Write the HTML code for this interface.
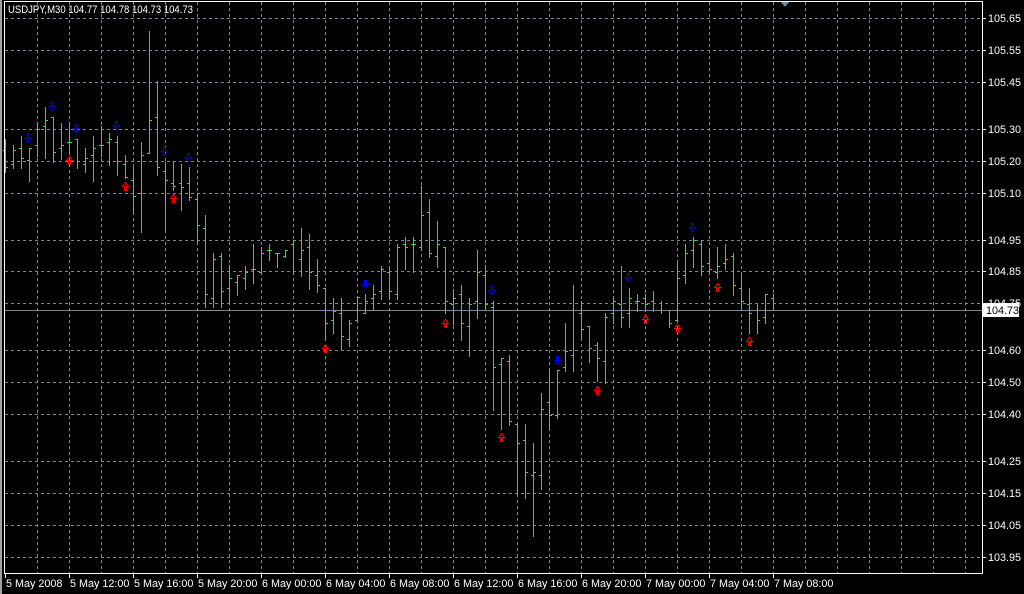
<!DOCTYPE html>
<html><head><meta charset="utf-8"><style>
html,body{margin:0;padding:0;background:#000;width:1024px;height:594px;overflow:hidden}
svg text{font-family:"Liberation Sans",sans-serif;font-size:10.8px;fill:#fff}
</style></head><body>
<svg id="c" width="1024" height="594" xmlns="http://www.w3.org/2000/svg" shape-rendering="crispEdges">
<rect width="1024" height="594" fill="#000"/>
<rect x="0" y="0" width="2" height="594" fill="#a0a0a0"/>
<g id="grid"></g>
<g id="bars"></g>
<g id="arrows"></g>
<line x1="5" y1="310.5" x2="982" y2="310.5" stroke="#778899"/>
<rect x="4.5" y="1.5" width="978" height="572" fill="none" stroke="#fff"/>
<polygon points="781,2 789,2 785,7" fill="#778899"/>
<text x="8" y="13" style="font-size:11px" textLength="185" lengthAdjust="spacingAndGlyphs">USDJPY,M30  104.77 104.78 104.73 104.73</text>
<g id="axis"></g>
<rect x="983" y="303" width="36" height="14" fill="#fff"/>
<text x="986" y="314" style="fill:#000">104.73</text>
</svg>
<script>
var NS="http://www.w3.org/2000/svg";
function el(p,t,a,txt){var e=document.createElementNS(NS,t);for(var k in a)e.setAttribute(k,a[k]);if(txt)e.textContent=txt;document.getElementById(p).appendChild(e);return e;}
var hy=[[18,"105.65"],[50,"105.55"],[82,"105.45"],[129,"105.30"],[161,"105.20"],[193,"105.10"],[240,"104.95"],[271,"104.85"],[303,"104.75"],[350,"104.60"],[382,"104.50"],[414,"104.40"],[461,"104.25"],[493,"104.15"],[525,"104.05"],[557,"103.95"]];
hy.forEach(function(h){
 el("grid","line",{x1:5,y1:h[0]+.5,x2:982,y2:h[0]+.5,stroke:"#778899","stroke-dasharray":"3,3"});
 el("axis","line",{x1:982,y1:h[0]+.5,x2:986,y2:h[0]+.5,stroke:"#fff"});
 el("axis","text",{x:988,y:h[0]+4},h[1]);
});
for(var x=37;x<982;x+=32){el("grid","line",{x1:x+.5,y1:2,x2:x+.5,y2:573,stroke:"#778899","stroke-dasharray":"3,3"});}
var tl=["5 May 2008","5 May 12:00","5 May 16:00","5 May 20:00","6 May 00:00","6 May 04:00","6 May 08:00","6 May 12:00","6 May 16:00","6 May 20:00","7 May 00:00","7 May 04:00","7 May 08:00"];
tl.forEach(function(t,j){var x=5+64*j;el("axis","line",{x1:x+.5,y1:573,x2:x+.5,y2:578,stroke:"#fff"});el("axis","text",{x:x+1,y:587},t);});
var B=[[139,172,150,167],[145,168,164,150],[136,168,148,158],[148,181,160,148],[122,156,145,129],[107,158,126,120],[117,162,117,152],[123,159,148,145],[122,153,142,142],[139,168,139,161],
[148,172,164,158],[136,181,155,148],[126,156,145,145],[133,165,142,139],[136,175,142,161],[155,178,164,177],[167,213,180,196],[142,232,193,155],[31,153,153,120],[81,175,117,167],
[162,230,171,180],[161,190,183,186],[164,210,183,187],[167,200,183,197],[193,244,199,225],[215,307,228,294],[253,307,298,259],[253,307,256,291],[265,303,288,278],[275,295,282,275],
[266,289,278,272],[244,283,269,269],[247,273,272,253],[244,260,250,250],[253,267,253,253],[250,257,256,250],[240,273,244,240],[228,276,259,250],[234,289,247,272],[259,292,275,285],
[288,340,288,323],[298,333,320,311],[298,349,313,336],[320,346,339,323],[296,320,320,297],[294,313,313,301],[285,310,298,294],[266,299,291,269],[269,299,272,291],[244,299,294,247],
[237,269,244,247],[237,272,244,244],[186,249,247,215],[199,257,212,253],[221,267,256,244],[247,313,247,301],[289,324,304,298],[285,340,294,323],[298,356,326,304],[250,318,301,272],
[265,310,275,304],[301,410,307,367],[358,429,364,358],[355,425,361,421],[424,495,424,443],[424,498,440,472],[443,536,475,472],[393,489,475,409],[368,429,402,415],[370,418,415,370],
[323,371,367,351],[285,371,355,310],[301,340,313,329],[326,362,326,348],[342,381,345,358],[313,383,361,317],[296,323,313,301],[266,327,304,317],[288,327,313,298],[294,311,301,301],
[294,311,298,304],[291,311,301,310],[301,313,310,310],[310,327,310,323],[263,321,320,278],[244,283,275,253],[237,267,250,240],[240,275,244,266],[249,272,263,269],[247,278,272,266],
[244,269,263,259],[253,295,256,285],[275,310,288,301],[288,333,304,313],[304,333,310,320],[294,323,317,294],[294,310,298,310]];
B.forEach(function(b,k){var x=5+8*k+.5;
 el("bars","line",{x1:x,y1:b[0],x2:x,y2:b[1]+1,stroke:"#33e033"});
 el("bars","line",{x1:x-2.5,y1:b[2]+.5,x2:x,y2:b[2]+.5,stroke:"#33e033"});
 el("bars","line",{x1:x,y1:b[3]+.5,x2:x+2.5,y2:b[3]+.5,stroke:"#33e033"});
});
function down(x,y){el("arrows","path",{d:"M"+(x-1)+" "+(y-4)+"h2v4h2l-3 4l-3-4h2z",fill:"none",stroke:"#0000ff","stroke-width":"1",transform:"translate(0.5,0.5)"});}
function up(x,y){el("arrows","path",{d:"M"+(x-1)+" "+(y+4)+"h2v-4h2l-3-4l-3 4h2z",fill:"none",stroke:"#ff0000","stroke-width":"1",transform:"translate(0.5,0.5)"});}
[[52,106],[28,138],[76,128],[116,125],[164,151],[188,157],[365,284],[492,290],[557,360],[628,277],[692,227]].forEach(function(a){down(a[0],a[1]);});
[[69,160],[125,186],[173,198],[325,348],[445,323],[501,437],[597,390],[645,319],[677,328],[717,287],[749,341]].forEach(function(a){up(a[0],a[1]);});
</script>
</body></html>
